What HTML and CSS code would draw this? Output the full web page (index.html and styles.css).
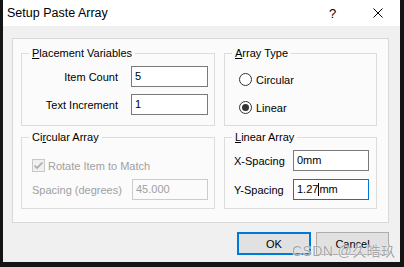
FILE: index.html
```html
<!DOCTYPE html>
<html lang="en">

<head>
    <meta charset="UTF-8">
    <title>Setup Paste Array</title>
    <link rel="stylesheet" href="styles.css">
</head>

<body>

    <div class="window">
        <div class="titlebar">
            <span class="title">Setup Paste Array</span>
            <span class="tb-btn help">?</span>
            <span class="tb-btn close">
                <svg width="10" height="10" viewBox="0 0 10 10">
                    <path d="M0.5 0.5 L9.5 9.5 M9.5 0.5 L0.5 9.5" stroke="#000" stroke-width="1" fill="none"/>
                </svg>
            </span>
        </div>

        <div class="content">
            <div class="panel">
                <div class="group">
                    <span class="caption"><u>P</u>lacement Variables</span>
                    <div class="fields placement">
                        <label>Item Count</label>
                        <div class="edit">5</div>
                        <label>Text Increment</label>
                        <div class="edit">1</div>
                    </div>
                </div>

                <div class="group">
                    <span class="caption"><u>A</u>rray Type</span>
                    <div class="radios">
                        <div class="radio"><span class="dot"></span>Circular</div>
                        <div class="radio"><span class="dot checked"></span>Linear</div>
                    </div>
                </div>

                <div class="group disabled">
                    <span class="caption">Ci<u>r</u>cular Array</span>
                    <div class="check">
                        <span class="box">
                            <svg width="11" height="11" viewBox="0 0 11 11">
                                <path d="M1.5 5.5 L4 8 L9.5 2.5" stroke="#a8a8a8" stroke-width="1.6" fill="none"/>
                            </svg>
                        </span>
                        Rotate Item to Match
                    </div>
                    <div class="fields circular">
                        <label>Spacing (degrees)</label>
                        <div class="edit">45.000</div>
                    </div>
                </div>

                <div class="group">
                    <span class="caption"><u>L</u>inear Array</span>
                    <div class="fields linear">
                        <label>X-Spacing</label>
                        <div class="edit">0mm</div>
                        <label>Y-Spacing</label>
                        <div class="edit focused">1.27<span class="caret"></span>mm</div>
                    </div>
                </div>
            </div>

            <div class="buttons">
                <button class="default">OK</button>
                <button>Cancel</button>
            </div>
        </div>

        <div class="watermark">CSDN @久皓玖</div>
    </div>

</body>

</html>
```

FILE: styles.css
```css
body {
    margin: 0;
    background-color: #141414;
    font-family: "Liberation Sans", Arial, sans-serif;
    font-size: 11px;
    color: #000;
}

.window {
    position: relative;
    margin-left: 3px;
    width: 397px;
    height: 262px;
    background: #f0f0f0;
    display: flex;
    flex-direction: column;
}

.titlebar {
    height: 26px;
    background: #fff;
    display: flex;
    align-items: center;
    padding-left: 4px;
}

.title {
    font-size: 12.5px;
    flex: 1;
}

.tb-btn {
    width: 45px;
    height: 26px;
    display: flex;
    align-items: center;
    justify-content: center;
}

.help {
    font-size: 13px;
}

.content {
    padding: 12px 11px 0 9px;
}

.panel {
    height: 185px;
    box-sizing: border-box;
    border: 1px solid #d9d9d9;
    background: #fbfbfb;
    display: grid;
    grid-template-columns: 194px 153px;
    grid-template-rows: 73px 72px;
    column-gap: 9px;
    row-gap: 11px;
    padding: 14px 0 0 8px;
}

.group {
    position: relative;
    border: 1px solid #dcdcdc;
}

.caption {
    position: absolute;
    left: 7px;
    top: -7px;
    padding: 0 3px;
    line-height: 13px;
    background: #fbfbfb;
}

.fields {
    display: grid;
    align-items: center;
}

.fields label {
    white-space: nowrap;
}

.placement {
    grid-template-columns: 1fr 77px;
    column-gap: 13px;
    row-gap: 7px;
    padding: 12px 6px 0 0;
    justify-items: end;
}

.placement .edit {
    justify-self: stretch;
}

.edit {
    height: 21px;
    box-sizing: border-box;
    border: 1px solid #7a7a7a;
    background: #fff;
    padding: 0 3px;
    line-height: 19px;
    display: flex;
    align-items: center;
}

.edit.focused {
    border-color: #0078d7;
}

.caret {
    display: inline-block;
    width: 1px;
    height: 13px;
    background: #000;
}

.radios {
    display: flex;
    flex-direction: column;
    gap: 15px;
    padding: 19px 0 0 14px;
}

.radio {
    display: flex;
    align-items: center;
    gap: 4px;
    height: 13px;
}

.dot {
    width: 13px;
    height: 13px;
    box-sizing: border-box;
    border: 1px solid #333;
    border-radius: 50%;
    background: #fff;
    display: flex;
    align-items: center;
    justify-content: center;
}

.dot.checked::after {
    content: "";
    width: 7px;
    height: 7px;
    border-radius: 50%;
    background: #333;
}

.disabled .check,
.disabled .fields label {
    color: #a0a0a0;
}

.check {
    display: flex;
    align-items: center;
    gap: 3px;
    height: 13px;
    padding: 21px 0 0 10px;
}

.box {
    width: 13px;
    height: 13px;
    box-sizing: border-box;
    border: 1px solid #c8c8c8;
    background: #f0f0f0;
    display: flex;
    align-items: center;
    justify-content: center;
}

.circular {
    grid-template-columns: 1fr 76px;
    padding: 7px 6px 0 10px;
}

.circular .edit {
    border-color: #cccccc;
    background: #fbfbfb;
    color: #a0a0a0;
}

.linear {
    grid-template-columns: 1fr 76px;
    row-gap: 8px;
    padding: 12px 7px 0 9px;
}

.buttons {
    display: flex;
    justify-content: flex-end;
    gap: 5px;
    margin-top: 9px;
}

button {
    width: 73px;
    height: 23px;
    box-sizing: border-box;
    border: 1px solid #adadad;
    background: #e1e1e1;
    font-family: "Liberation Sans", Arial, sans-serif;
    font-size: 11px;
    color: #000;
    padding: 0;
}

button.default {
    width: 74px;
    border: 2px solid #0078d7;
}

.watermark {
    position: absolute;
    left: 289px;
    top: 240px;
    font-family: "Liberation Sans", "Noto Sans CJK SC", sans-serif;
    font-size: 14px;
    letter-spacing: 0.4px;
    color: rgba(140, 140, 140, 0.8);
    text-shadow: 0 0 1px #fff, 0 0 1px #fff;
    white-space: nowrap;
}
```
